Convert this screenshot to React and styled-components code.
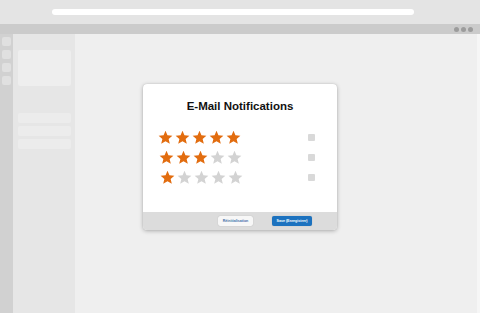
import React from "react";
import styled, { createGlobalStyle } from "styled-components";

const Global = createGlobalStyle`
  html, body { margin: 0; padding: 0; background: #efefef; }
  body { font-family: "Liberation Sans", Arial, sans-serif; }
`;

const Page = styled.div`
  width: 480px;
  height: 313px;
  display: flex;
  flex-direction: column;
  overflow: hidden;
`;

const TopBar = styled.div`
  height: 24px;
  background: #e4e4e4;
  display: flex;
  align-items: flex-start;
  padding: 9px 0 0 52px;
  box-sizing: border-box;
`;

const UrlBar = styled.div`
  width: 362px;
  height: 6px;
  border-radius: 3px;
  background: #ffffff;
`;

const TabBar = styled.div`
  height: 10px;
  background: #cbcbcb;
  display: flex;
  justify-content: flex-end;
  align-items: center;
  gap: 2px;
  padding-right: 7px;
`;

const Dot = styled.span`
  width: 5px;
  height: 5px;
  border-radius: 50%;
  background: #9c9c9c;
`;

const Main = styled.div`
  flex: 1;
  display: flex;
`;

const Rail = styled.div`
  width: 13px;
  background: #d1d1d1;
  display: flex;
  flex-direction: column;
  align-items: center;
  gap: 4px;
  padding-top: 3px;
  box-sizing: border-box;
`;

const RailItem = styled.div`
  width: 9px;
  height: 9px;
  border-radius: 2px;
  background: #e0e0e0;
`;

const Sidebar = styled.div`
  width: 62px;
  background: #e6e6e6;
  padding: 16px 4px 0 5px;
  box-sizing: border-box;
  display: flex;
  flex-direction: column;
`;

const SideCard = styled.div`
  height: 36px;
  border-radius: 2px;
  background: #eeeeee;
  margin-bottom: 27px;
`;

const SideRow = styled.div`
  height: 10px;
  border-radius: 2px;
  background: #ececec;
  margin-bottom: 3px;
`;

const Content = styled.div`
  flex: 1;
  background: #efefef;
  padding: 50px 0 0 68px;
  box-sizing: border-box;
`;

const Edge = styled.div`
  width: 3px;
  background: #f6f6f6;
`;

const Modal = styled.div`
  width: 194px;
  height: 146px;
  background: #ffffff;
  border-radius: 4px;
  box-shadow: 0 1px 4px rgba(0, 0, 0, 0.28), 0 0 1px rgba(0, 0, 0, 0.2);
  display: flex;
  flex-direction: column;
  overflow: hidden;
`;

const Body = styled.div`
  flex: 1;
  display: flex;
  flex-direction: column;
  padding: 16px 22px 0 15px;
`;

const Title = styled.h1`
  margin: 0 0 14px;
  font-size: 11.5px;
  line-height: 13px;
  font-weight: bold;
  color: #111;
  text-align: center;
  padding-left: 7px;
`;

const Row = styled.div`
  height: 20px;
  display: flex;
  align-items: center;
  justify-content: space-between;
`;

const Stars = styled.div`
  display: flex;
  gap: 2px;
  padding-left: ${(p) => p.$shift}px;
`;

const Check = styled.span`
  width: 7px;
  height: 7px;
  border-radius: 1px;
  background: #d9d9d9;
`;

const Footer = styled.div`
  height: 18px;
  background: #dcdcdc;
  display: flex;
  align-items: center;
  justify-content: flex-end;
  gap: 19px;
  padding-right: 25px;
`;

const Button = styled.button`
  height: 10px;
  width: ${(p) => p.$w}px;
  padding: 0;
  border: none;
  border-radius: 2px;
  font-family: "Liberation Sans", Arial, sans-serif;
  font-size: 3.6px;
  font-weight: bold;
  line-height: 10px;
  white-space: nowrap;
  background: ${(p) => (p.$primary ? "#1c72bf" : "#f7f7f7")};
  color: ${(p) => (p.$primary ? "#ffffff" : "#3f6fa8")};
  box-shadow: 0 0 1px rgba(0, 0, 0, 0.25);
`;

const Star = ({ on }) => (
  <svg width="15" height="15" viewBox="0 0 24 24">
    <path
      d="M12 1.2l3.1 7.3 7.9.6-6 5.2 1.9 7.7L12 17.9l-6.9 4.1 1.9-7.7-6-5.2 7.9-.6z"
      fill={on ? "#e26d10" : "#d3d3d3"}
    />
  </svg>
);

const ratings = [
  { n: 5, shift: 0 },
  { n: 3, shift: 1 },
  { n: 1, shift: 2 },
];

export default function App() {
  return (
    <>
      <Global />
      <Page>
        <TopBar>
          <UrlBar />
        </TopBar>
        <TabBar>
          <Dot />
          <Dot />
          <Dot />
        </TabBar>
        <Main>
          <Rail>
            <RailItem />
            <RailItem />
            <RailItem />
            <RailItem />
          </Rail>
          <Sidebar>
            <SideCard />
            <SideRow />
            <SideRow />
            <SideRow />
          </Sidebar>
          <Content>
            <Modal>
              <Body>
                <Title>E-Mail Notifications</Title>
                {ratings.map((r, i) => (
                  <Row key={i}>
                    <Stars $shift={r.shift}>
                      {[0, 1, 2, 3, 4].map((k) => (
                        <Star key={k} on={k < r.n} />
                      ))}
                    </Stars>
                    <Check />
                  </Row>
                ))}
              </Body>
              <Footer>
                <Button $w={35}>Réinitialisation</Button>
                <Button $w={40} $primary>
                  Save (Enregistrer)
                </Button>
              </Footer>
            </Modal>
          </Content>
          <Edge />
        </Main>
      </Page>
    </>
  );
}
